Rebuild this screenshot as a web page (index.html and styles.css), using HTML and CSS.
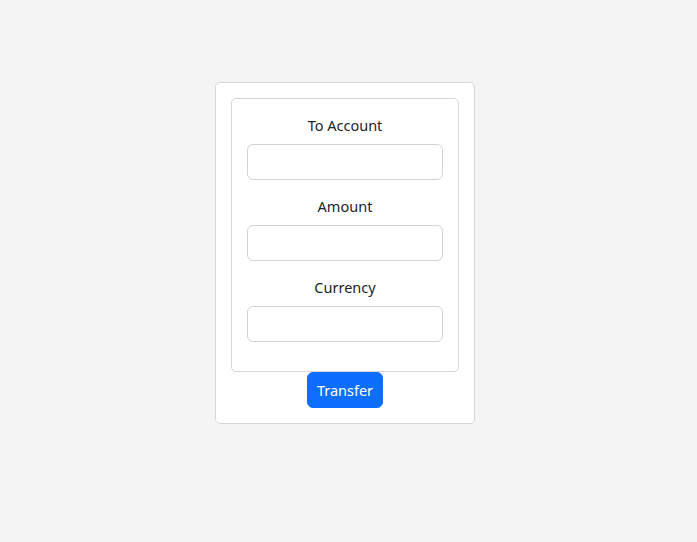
FILE: index.html
```html
<!DOCTYPE html>
<html>
<head>
<meta charset="utf-8">
<link rel="stylesheet" href="styles.css">
</head>
<body>
<div class="page">
  <div class="card">
    <div class="inner">
      <div class="group">
        <label class="label">To Account</label>
        <input class="input" type="text">
      </div>
      <div class="group">
        <label class="label">Amount</label>
        <input class="input" type="text">
      </div>
      <div class="group">
        <label class="label">Currency</label>
        <input class="input" type="text">
      </div>
    </div>
    <div class="actions">
      <button class="btn">Transfer</button>
    </div>
  </div>
</div>
</body>
</html>
```
FILE: styles.css
```css
html, body {
  margin: 0;
  padding: 0;
  background: #f4f4f4;
  font-family: "Noto Sans", "Open Sans", sans-serif;
  color: #212529;
}
.page {
  display: flex;
  justify-content: center;
  padding: 82px 7px 0 0;
}
.card {
  width: 260px;
  box-sizing: border-box;
  background: #fff;
  border: 1px solid #d6d6d6;
  border-radius: 5px;
  padding: 15px 15px 15px;
}
.inner {
  border: 1px solid #d6d6d6;
  border-radius: 5px;
  padding: 15px 15px 14px;
  display: flex;
  flex-direction: column;
}
.group {
  display: flex;
  flex-direction: column;
  align-items: stretch;
  margin-bottom: 15px;
}
.label {
  text-align: center;
  font-size: 14.5px;
  line-height: 22px;
  margin-bottom: 8px;
}
.input {
  box-sizing: border-box;
  height: 36px;
  border: 1px solid #ced4da;
  border-radius: 6px;
  background: #fff;
  margin: 0;
  padding: 0 10px;
  font: inherit;
}
.actions {
  display: flex;
  justify-content: center;
}
.btn {
  box-sizing: border-box;
  width: 76px;
  height: 36px;
  background: #0d6efd;
  color: #fff;
  border: 1px solid #0d6efd;
  border-radius: 6px;
  font-family: inherit;
  font-size: 14.5px;
  padding: 0;
}
```
